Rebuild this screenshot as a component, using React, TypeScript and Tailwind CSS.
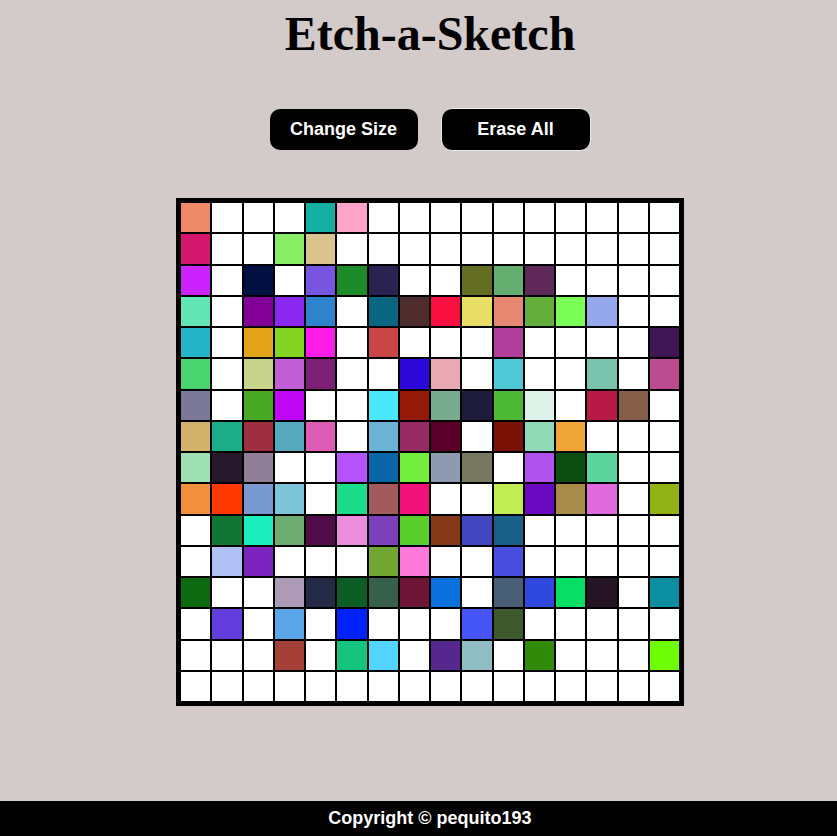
import React from "react";

const W = "#ffffff";

const GRID: string[][] = [
  ["#ee8866", W, W, W, "#14b0a4", "#fda4c8", W, W, W, W, W, W, W, W, W, W],
  ["#d4166c", W, W, "#88ee66", "#dcc38e", W, W, W, W, W, W, W, W, W, W, W],
  ["#cc22ff", W, "#001040", W, "#7755e0", "#1f8a28", "#2a2250", W, W, "#646e22", "#64ae70", "#5e2858", W, W, W, W],
  ["#62e6b6", W, "#820098", "#8a28f0", "#2e84cc", W, "#0a6680", "#4e2c2e", "#fa1040", "#e8de66", "#e68872", "#64ae3c", "#78fe56", "#96a8ec", W, W],
  ["#24b4c8", W, "#e4a41a", "#84d424", "#fc1ce8", W, "#c84646", W, W, W, "#b03e9a", W, W, W, W, "#3e1654"],
  ["#48d46e", W, "#c8d48c", "#c25ed6", "#7c2076", W, W, "#2c08d8", "#eaa8b4", W, "#4ec8d4", W, W, "#78c4ac", W, "#bc4c90"],
  ["#7c7898", W, "#48aa24", "#c006f4", W, W, "#4ae8fc", "#961808", "#78aa90", "#1e1c3a", "#4cb834", "#def2ea", W, "#b81a48", "#845e48", W],
  ["#d2b26a", "#1cae88", "#9e2e40", "#56a8bc", "#dc5cb6", W, "#6ab2d6", "#962c62", "#5a0028", W, "#7a1208", "#90dab8", "#eea436", W, W, W],
  ["#9ee0b4", "#26182a", "#8e7e98", W, W, "#b452fc", "#0a66a6", "#74ee3e", "#8e9ab0", "#787860", W, "#b052ee", "#0c4e12", "#5cd49e", W, W],
  ["#f0903c", "#fe3800", "#7898d0", "#7ec4d8", W, "#1cdc8a", "#a25a5c", "#f2127a", W, W, "#c0ee52", "#6a0ac0", "#aa8c4a", "#e06adc", W, "#92b214"],
  [W, "#107634", "#1aeebc", "#6eac72", "#500c48", "#ec8cdc", "#7c40b8", "#5ace2a", "#843818", "#4446c0", "#186088", W, W, W, W, W],
  [W, "#b0c0f4", "#7c24c0", W, W, W, "#72a632", "#fe7ada", W, W, "#4a4ee0", W, W, W, W, W],
  ["#0c6a10", W, W, "#ac9ab6", "#222a46", "#0c5e26", "#36604a", "#6e1434", "#0a70dc", W, "#485e74", "#2e48e0", "#06de66", "#241424", W, "#0a8ea0"],
  [W, "#623cdc", W, "#5aa6e8", W, "#0022fe", W, W, W, "#4454f6", "#3e5a2c", W, W, W, W, W],
  [W, W, W, "#a44038", W, "#14c47c", "#52d4fe", W, "#56288e", "#90bcc4", W, "#328a0a", W, W, W, "#6efe06"],
  [W, W, W, W, W, W, W, W, W, W, W, W, W, W, W, W],
];

export default function App() {
  return (
    <div className="flex h-[836px] flex-col bg-[#d3caca] font-['Liberation_Sans',Arial,sans-serif]">
      <main className="flex flex-1 flex-col items-center pl-[23px]">
        <h1 className="mt-[6px] font-['Liberation_Serif','Times_New_Roman',serif] text-[48px] font-bold leading-[56px] text-black">
          Etch-a-Sketch
        </h1>
        <div className="mt-[46px] flex items-center gap-[23px]">
          <button className="flex h-[41px] w-[148px] items-center justify-center rounded-[10px] bg-black text-[18px] font-bold text-white">
            Change Size
          </button>
          <button className="flex h-[43px] w-[150px] items-center justify-center rounded-[11px] border border-[#ececec] bg-black text-[18px] font-bold text-white">
            Erase All
          </button>
        </div>
        <div className="mt-[47px] grid h-[508px] w-[508px] grid-cols-16 grid-rows-16 border-4 border-black bg-white">
          {GRID.flatMap((row, r) =>
            row.map((c, i) => (
              <div
                key={`${r}-${i}`}
                className="border border-black"
                style={{ backgroundColor: c }}
              />
            ))
          )}
        </div>
      </main>
      <footer className="flex h-[35px] items-center justify-center bg-black pl-[23px] text-[18px] font-bold text-white">
        Copyright © pequito193
      </footer>
    </div>
  );
}
